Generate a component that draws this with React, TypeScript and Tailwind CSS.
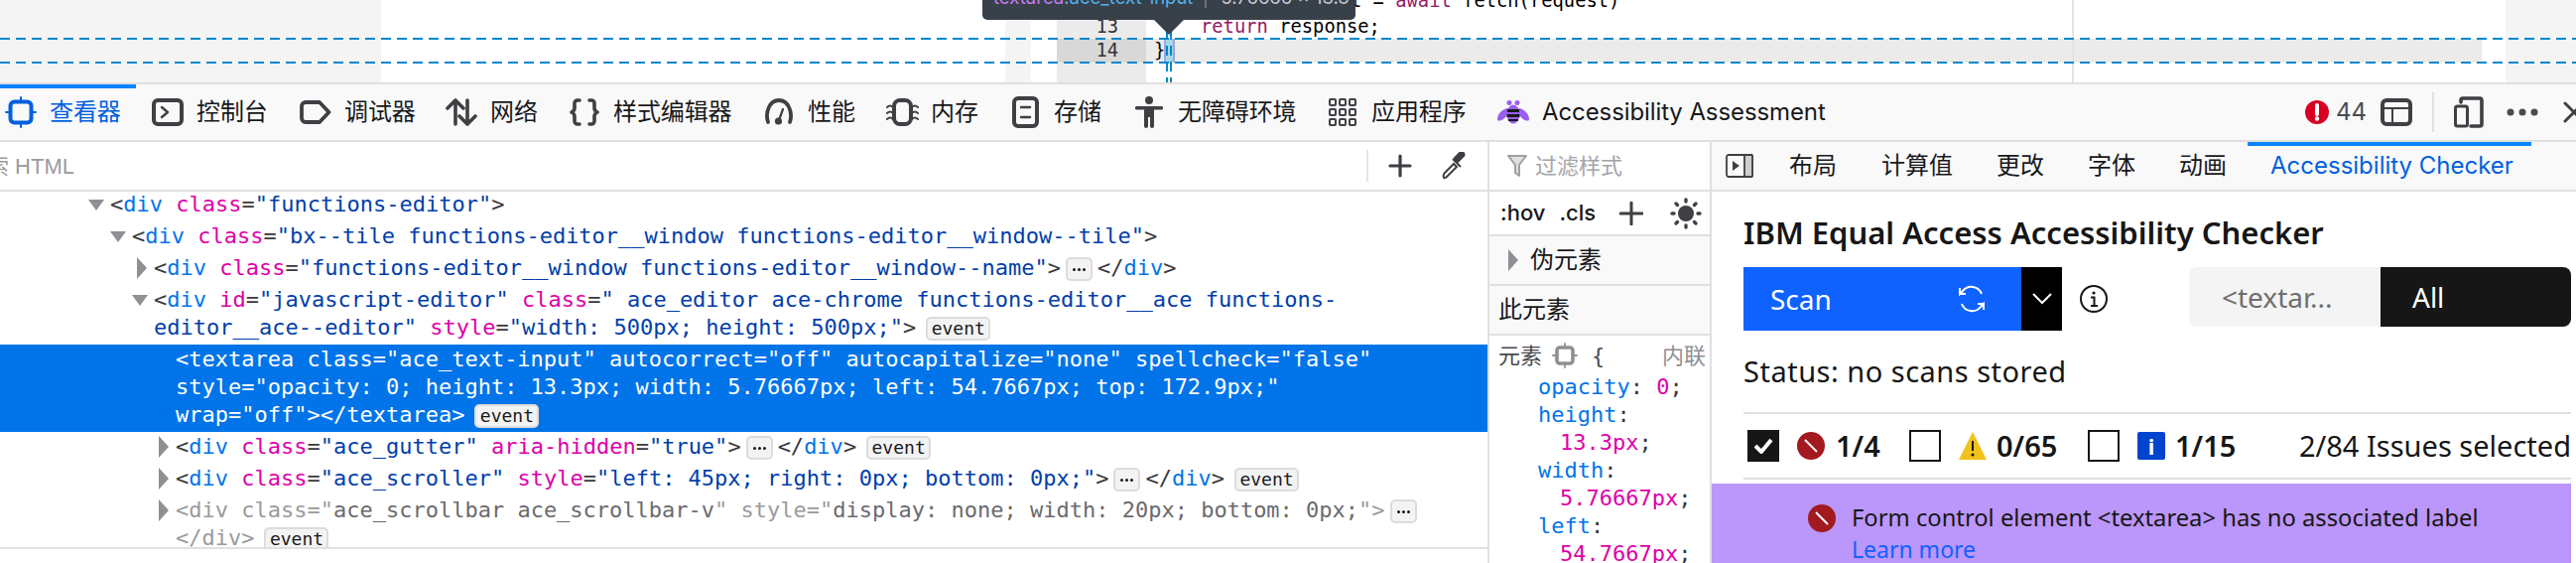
import React from "react";

const UI = "font-['Inter','Noto_Sans_CJK_SC',sans-serif]";
const MONO = "font-['DejaVu_Sans_Mono',monospace]";
const PLEX = "font-['Noto_Sans',sans-serif]";

const S = { fill: "none", stroke: "#3f3f44", strokeLinecap: "round" as const, strokeLinejoin: "round" as const };

const InspectorIcon = () => (
  <svg width="32" height="32" viewBox="0 0 32 32" fill="none" stroke="#0060df" strokeLinecap="round">
    <rect x="5.5" y="5.5" width="21" height="21" rx="4" strokeWidth="4" />
    <path d="M16 1v4M16 27v4M1 16h4M27 16h4" strokeWidth="2" />
  </svg>
);
const ConsoleIcon = () => (
  <svg width="32" height="28" viewBox="0 0 32 28" {...S}>
    <rect x="2" y="2" width="28" height="24" rx="4" strokeWidth="4" />
    <path d="M10 9l6 5-6 5" strokeWidth="2.4" />
  </svg>
);
const DebuggerIcon = () => (
  <svg width="32" height="24" viewBox="0 0 32 24" {...S}>
    <path d="M6 2h14l9.5 10L20 22H6a4 4 0 0 1-4-4V6a4 4 0 0 1 4-4z" strokeWidth="3.8" />
  </svg>
);
const NetworkIcon = () => (
  <svg width="32" height="28" viewBox="0 0 32 28" {...S} strokeWidth="3.6">
    <path d="M10 26V2M2 10l8-8 8 8" />
    <path d="M22 2v24M14 18l8 8 8-8" />
  </svg>
);
const BracesIcon = () => (
  <svg width="30" height="28" viewBox="0 0 30 28" {...S} strokeWidth="3.6">
    <path d="M10 2H8a3 3 0 0 0-3 3v5c0 2-1 3-3 4 2 1 3 2 3 4v5a3 3 0 0 0 3 3h2" />
    <path d="M20 2h2a3 3 0 0 1 3 3v5c0 2 1 3 3 4-2 1-3 2-3 4v5a3 3 0 0 1-3 3h-2" />
  </svg>
);
const PerfIcon = () => (
  <svg width="32" height="28" viewBox="0 0 32 28" {...S}>
    <path d="M5 24C2 15 6 2 16 2s14 13 11 22" strokeWidth="3.8" />
    <path d="M16 22l4-11" strokeWidth="2.2" />
    <circle cx="15.5" cy="23" r="3.6" fill="#3f3f44" stroke="none" />
  </svg>
);
const MemoryIcon = () => (
  <svg width="33" height="28" viewBox="0 0 33 28" {...S}>
    <rect x="8" y="2" width="17" height="24" rx="6" strokeWidth="4" />
    <path d="M1 9c2-2 4-2 6 0M1 15c2-2 4-2 6 0M1 21c2-2 4-2 6 0M26 9c2-2 4-2 6 0M26 15c2-2 4-2 6 0M26 21c2-2 4-2 6 0" strokeWidth="2" />
  </svg>
);
const StorageIcon = () => (
  <svg width="27" height="32" viewBox="0 0 27 32" {...S}>
    <rect x="2" y="2" width="23" height="28" rx="4" strokeWidth="4" />
    <path d="M9 11h9M9 21h9" strokeWidth="2.4" />
  </svg>
);
const A11yIcon = () => (
  <svg width="28" height="32" viewBox="0 0 28 32">
    <circle cx="14" cy="4" r="4" fill="#3f3f44" />
    <path d="M1.5 10h25a1.5 1.5 0 0 1 0 3.500H19V30a2 2 0 0 1-4 0v-9h-2v9a2 2 0 0 1-4 0V13.500H1.500a1.750 1.750 0 0 1 0-3.500z" fill="#3f3f44" />
  </svg>
);
const AppsIcon = () => (
  <svg width="28" height="28" viewBox="0 0 28 28" fill="none" stroke="#3f3f44" strokeWidth="2">
    {[1, 11, 21].map((y) => [1, 11, 21].map((x) => <rect key={`${x}-${y}`} x={x} y={y} width="6" height="6" rx="1" />))}
  </svg>
);
const BeeIcon = () => (
  <svg width="32" height="24" viewBox="0 0 32 24">
    <circle cx="12" cy="2.500" r="2.500" fill="#9a5df0" />
    <circle cx="20" cy="2.500" r="2.500" fill="#9a5df0" />
    <path d="M10 8C5 9 0 14 0 19c0 2 3 2 6 0 3-2 5-6 5-10z" fill="#9a5df0" />
    <path d="M22 8c5 1 10 6 10 11 0 2-3 2-6 0-3-2-5-6-5-10z" fill="#9a5df0" />
    <ellipse cx="16" cy="14" rx="6.500" ry="9.500" fill="#9a5df0" />
    <path d="M10 9h12v3H10zM9.500 14h13v3h-13zM11 19h10v2H11z" fill="#1a1a1a" />
  </svg>
);

const Tab = ({ w, icon, label, active }: { w: string; icon: React.ReactNode; label: string; active?: boolean }) => (
  <div className={`relative flex h-full shrink-0 items-center ${w}`}>
    <div className="mr-[8px] flex w-[42px] shrink-0 items-center justify-center">{icon}</div>
    <span className={`whitespace-nowrap text-[24px] tracking-[-0.1px] ${active ? "text-[#0060df]" : "text-[#18181a]"}`}>{label}</span>
    {active && <div className="absolute left-0 top-0 h-[4px] w-[137px] bg-[#0a84ff]" />}
  </div>
);

const Ev = () => (
  <span className="ml-[10px] mt-[3px] inline-flex h-[24px] w-[65px] items-center justify-center rounded-[5px] border-2 border-[#dcdcdc] bg-[#f3f3f3] align-top text-[18px] leading-none text-[#18181a]">event</span>
);
const Dots = () => (
  <span className="mx-[5px] mt-[3px] inline-flex h-[24px] w-[27px] items-center justify-center gap-[2px] rounded-[5px] border-2 border-[#dcdcdc] bg-[#f3f3f3] align-top">
    <i className="h-[3px] w-[3px] rounded-full bg-[#18181a]" />
    <i className="h-[3px] w-[3px] rounded-full bg-[#18181a]" />
    <i className="h-[3px] w-[3px] rounded-full bg-[#18181a]" />
  </span>
);
const Tg = ({ c }: { c: string }) => <span className="text-[#0074e8]">{c}</span>;
const At = ({ c }: { c: string }) => <span className="text-[#dd00a9]">{c}</span>;
const Va = ({ c }: { c: string }) => <span className="text-[#003eaa]">{c}</span>;
const Down = () => (
  <svg width="16" height="14" viewBox="0 0 16 14" className="shrink-0"><path d="M0 2h16l-8 11z" fill="#8f8f94" /></svg>
);
const Right = () => (
  <svg width="11" height="22" viewBox="0 0 11 22" className="shrink-0"><path d="M1 0l10 11L1 22z" fill="#8f8f94" /></svg>
);

const Row = ({ pad, tw, children }: { pad: string; tw?: React.ReactNode; children: React.ReactNode }) => (
  <div className={`flex pb-[3px] pt-[1px] leading-[28px] text-[#38383d] ${pad}`}>
    <div className="flex h-[28px] w-[22px] shrink-0 items-center">{tw}</div>
    <div className="whitespace-pre">{children}</div>
  </div>
);

const Violation = () => (
  <svg width="28" height="28" viewBox="0 0 28 28" className="shrink-0">
    <circle cx="14" cy="14" r="14" fill="#a2191f" />
    <path d="M8 8l12 12" stroke="#fff" strokeWidth="2" />
  </svg>
);
const Check = ({ on }: { on?: boolean }) =>
  on ? (
    <div className="flex h-[32px] w-[32px] shrink-0 items-center justify-center bg-[#161616]">
      <svg width="20" height="16" viewBox="0 0 20 16"><path d="M2 8l6 6L18 2" fill="none" stroke="#fff" strokeWidth="4" /></svg>
    </div>
  ) : (
    <div className="h-[32px] w-[32px] shrink-0 border-2 border-[#161616] bg-white" />
  );

export default function App() {
  return (
    <div className={`h-[567px] w-[2596px] overflow-hidden bg-white ${UI}`}>
      {/* page under the tools */}
      <div className="relative flex h-[83px] overflow-hidden">
        <div className="w-[384px] shrink-0 bg-[#f4f4f4]" />
        <div className="w-[629px] shrink-0" />
        <div className="w-[26px] shrink-0 bg-[#f4f4f4]" />
        <div className="w-[26px] shrink-0" />
        <div className={`w-[90px] shrink-0 bg-[#ebebeb] pt-[14px] text-right text-[18.8px] text-[#333] ${MONO}`}>
          <div className="h-[25px] pr-[28px] leading-[25px]">13</div>
          <div className="h-[24px] bg-[#d8d8d8] pr-[28px] leading-[24px]">14</div>
        </div>
        <div className={`w-[933px] shrink-0 pt-[14px] text-[18.8px] text-black ${MONO}`}>
          <div className="h-[25px] pl-[55px] leading-[25px]"><span className="text-[#931a68]">return</span> response;</div>
          <div className="h-[24px] bg-[#ebebeb] pl-[8px] leading-[24px]">{"}"}</div>
        </div>
        <div className="w-[437px] shrink-0 border-l-2 border-[#e4e4e4] pt-[39px]">
          <div className="h-[24px] w-[411px] bg-[#ebebeb]" />
        </div>
        <div className="flex-1 bg-[#f4f4f4]" />

        {/* overlays: fetch fragment, highlighter box, guides, infobar */}
        <div className={`absolute left-[1361px] top-[-13px] whitespace-pre text-[18.8px] text-black ${MONO}`}>t = <span className="text-[#931a68]">await</span> fetch(request)</div>
        <div className="absolute left-[1173px] top-[39px] h-[24px] w-[11px] border-x-2 border-[#a3a3df] bg-[#a4d8e8]" />
        <div className="absolute left-0 top-[38px] h-[2px] w-full bg-[repeating-linear-gradient(90deg,#0088cc_0,#0088cc_10px,transparent_10px,transparent_16px)]" />
        <div className="absolute left-0 top-[62px] h-[2px] w-full bg-[repeating-linear-gradient(90deg,#0088cc_0,#0088cc_10px,transparent_10px,transparent_16px)]" />
        <div className="absolute left-[1175px] top-[30px] h-[53px] w-[2px] bg-[repeating-linear-gradient(180deg,#0088cc_0,#0088cc_10px,transparent_10px,transparent_16px)]" />
        <div className="absolute left-[1179px] top-[30px] h-[53px] w-[2px] bg-[repeating-linear-gradient(180deg,#0088cc_0,#0088cc_10px,transparent_10px,transparent_16px)]" />
        <div className="absolute left-[990px] top-0 flex h-[20px] w-[376px] items-start overflow-hidden rounded-b-[5px] bg-[#38404a] pl-[11px] text-[18.500px] leading-[26px] whitespace-nowrap">
          <span className="-mt-[16px] text-[#c77dee]">textarea</span>
          <span className="-mt-[16px] text-[#4fb4f0]">.ace_text-input</span>
          <span className="ml-[12px] mr-[14px] h-[8px] w-[2px] bg-[#6b7079]" />
          <span className="-mt-[16px] text-[#c8cbd0]">5.76666 × 13.3</span>
        </div>
        <svg width="30" height="15" viewBox="0 0 30 15" className="absolute left-[1163px] top-[20px]"><path d="M0 0h30L15 15z" fill="#38404a" /></svg>
      </div>

      {/* main toolbar */}
      <div className="flex h-[60px] items-center overflow-hidden border-y-2 border-[#e0e0e0] bg-[#f9f9fa]">
        <Tab w="w-[148px]" active icon={<InspectorIcon />} label="查看器" />
        <Tab w="w-[149px]" icon={<ConsoleIcon />} label="控制台" />
        <Tab w="w-[147px]" icon={<DebuggerIcon />} label="调试器" />
        <Tab w="w-[124px]" icon={<NetworkIcon />} label="网络" />
        <Tab w="w-[196px]" icon={<BracesIcon />} label="样式编辑器" />
        <Tab w="w-[124px]" icon={<PerfIcon />} label="性能" />
        <Tab w="w-[124px]" icon={<MemoryIcon />} label="内存" />
        <Tab w="w-[125px]" icon={<StorageIcon />} label="存储" />
        <Tab w="w-[195px]" icon={<A11yIcon />} label="无障碍环境" />
        <Tab w="w-[172px]" icon={<AppsIcon />} label="应用程序" />
        <Tab w="w-[360px]" icon={<BeeIcon />} label="Accessibility Assessment" />
        <div className="ml-auto flex items-center">
          <svg width="24" height="24" viewBox="0 0 24 24">
            <circle cx="12" cy="12" r="12" fill="#d70022" />
            <path d="M12 5v9" stroke="#fff" strokeWidth="4" strokeLinecap="round" />
            <circle cx="12" cy="18.500" r="2.200" fill="#fff" />
          </svg>
          <span className="ml-[7px] w-[27px] text-[24px] text-[#4a4a4f]">44</span>
          <svg width="32" height="28" viewBox="0 0 32 28" className="ml-[18px]" {...S}>
            <rect x="2" y="2" width="28" height="24" rx="4" strokeWidth="4" />
            <path d="M2 10h28M12 10v16" strokeWidth="2" />
          </svg>
          <div className="ml-[20px] h-[40px] w-[2px] bg-[#e0e0e0]" />
          <svg width="30" height="32" viewBox="0 0 30 32" className="ml-[20px]" {...S}>
            <path d="M7 6V4a2 2 0 0 1 2-2h17a2 2 0 0 1 2 2v24a2 2 0 0 1-2 2h-9" strokeWidth="3.600" />
            <rect x="1.500" y="10" width="12" height="20" rx="2" strokeWidth="3" />
          </svg>
          <svg width="32" height="10" viewBox="0 0 32 10" className="ml-[23px]" fill="#4a4a4f">
            <circle cx="4" cy="5" r="3.500" /><circle cx="16" cy="5" r="3.500" /><circle cx="28" cy="5" r="3.500" />
          </svg>
          <svg width="13" height="22" viewBox="0 0 13 22" className="ml-[25px]" {...S} strokeWidth="3">
            <path d="M2 2l18 18M20 2L2 20" />
          </svg>
        </div>
      </div>

      <div className="flex h-[424px] overflow-hidden">
        {/* markup pane */}
        <div className="w-[1501px] shrink-0 border-r-2 border-[#e0e0e0]">
          <div className="flex h-[50px] items-center overflow-hidden border-b-2 border-[#e0e0e0]">
            <span className="ml-[-13px] whitespace-nowrap text-[22px] text-[#9a9a9e] font-['Liberation_Sans','Noto_Sans_CJK_SC',sans-serif]">索 HTML</span>
            <div className="ml-auto mr-[20px] flex items-center">
              <div className="h-[32px] w-[2px] bg-[#e4e4e4]" />
              <svg width="24" height="24" viewBox="0 0 24 24" className="ml-[20px]" stroke="#3f3f44" strokeWidth="3.200" strokeLinecap="round"><path d="M12 2v20M2 12h20" /></svg>
              <svg width="26" height="28" viewBox="0 0 26 28" className="ml-[30px]" fill="none" stroke="#3f3f44" strokeWidth="2">
                <path d="M2 26c-1-1 0-4 1-5l9-9 3 3-9 9c-1 1-3 3-4 2z" />
                <path d="M11 7l8 8M16 10l6-6c2-2-2-6-4-3l-5 5z" fill="#3f3f44" />
              </svg>
            </div>
          </div>
          <div className="h-[358px] overflow-hidden">
            <div className={`-mt-[2px] text-[22px] ${MONO}`}>
              <Row pad="pl-[89px]" tw={<Down />}>&lt;<Tg c="div" /> <At c="class" />=<Va c={'"functions-editor"'} />&gt;</Row>
              <Row pad="pl-[111px]" tw={<Down />}>&lt;<Tg c="div" /> <At c="class" />=<Va c={'"bx--tile functions-editor__window functions-editor__window--tile"'} />&gt;</Row>
              <Row pad="pl-[133px]" tw={<div className="ml-[4px]"><Right /></div>}>&lt;<Tg c="div" /> <At c="class" />=<Va c={'"functions-editor__window functions-editor__window--name"'} />&gt;<Dots />&lt;/<Tg c="div" />&gt;</Row>
              <Row pad="pl-[133px]" tw={<Down />}>
                <div>&lt;<Tg c="div" /> <At c="id" />=<Va c={'"javascript-editor"'} /> <At c="class" />=<Va c={'" ace_editor ace-chrome functions-editor__ace functions-'} /></div>
                <div><Va c={'editor__ace--editor"'} /> <At c="style" />=<Va c={'"width: 500px; height: 500px;"'} />&gt;<Ev /></div>
              </Row>
              <div className="flex bg-[#0074e8] pb-[3px] pl-[155px] pt-[1px] leading-[28px] text-white">
                <div className="w-[22px] shrink-0" />
                <div className="whitespace-pre">
                  <div>{'<textarea class="ace_text-input" autocorrect="off" autocapitalize="none" spellcheck="false"'}</div>
                  <div>{'style="opacity: 0; height: 13.3px; width: 5.76667px; left: 54.7667px; top: 172.9px;"'}</div>
                  <div>{'wrap="off"></textarea>'}<Ev /></div>
                </div>
              </div>
              <Row pad="pl-[155px]" tw={<div className="ml-[4px]"><Right /></div>}>&lt;<Tg c="div" /> <At c="class" />=<Va c={'"ace_gutter"'} /> <At c="aria-hidden" />=<Va c={'"true"'} />&gt;<Dots />&lt;/<Tg c="div" />&gt;<Ev /></Row>
              <Row pad="pl-[155px]" tw={<div className="ml-[4px]"><Right /></div>}>&lt;<Tg c="div" /> <At c="class" />=<Va c={'"ace_scroller"'} /> <At c="style" />=<Va c={'"left: 45px; right: 0px; bottom: 0px;"'} />&gt;<Dots />&lt;/<Tg c="div" />&gt;<Ev /></Row>
              <Row pad="pl-[155px]" tw={<div className="ml-[4px]"><Right /></div>}>
                <div className="text-[#9a9a9e]">&lt;div class=&quot;<span className="text-[#6a6a6f]">ace_scrollbar ace_scrollbar-v</span>&quot; style=&quot;<span className="text-[#6a6a6f]">display: none; width: 20px; bottom: 0px;</span>&quot;&gt;<Dots /></div>
                <div className="text-[#9a9a9e]">&lt;/div&gt;<Ev /></div>
              </Row>
            </div>
          </div>
          <div className="h-[2px] bg-[#e0e0e0]" />
        </div>

        {/* rules pane */}
        <div className="w-[224px] shrink-0 overflow-hidden border-r-2 border-[#e0e0e0]">
          <div className="flex h-[50px] items-center border-b-2 border-[#e0e0e0] pl-[18px] text-[22px] text-[#a4a4a8]">
            <svg width="20" height="22" viewBox="0 0 20 22" fill="#e0e0e2" stroke="#a0a0a4" strokeWidth="2" strokeLinejoin="round"><path d="M1 1h18l-7 9v11l-4-3v-8z" /></svg>
            <span className="ml-[8px]">过滤样式</span>
          </div>
          <div className="flex h-[45px] items-center border-b-2 border-[#e0e0e0] pl-[11px] text-[22px] font-medium text-[#18181a]">
            <span>:hov</span>
            <span className="ml-[14px]">.cls</span>
            <svg width="24" height="24" viewBox="0 0 24 24" className="ml-[24px]" stroke="#3f3f44" strokeWidth="3" strokeLinecap="round"><path d="M12 1v22M1 12h22" /></svg>
            <svg width="32" height="32" viewBox="0 0 32 32" className="ml-[27px]">
              <circle cx="16" cy="16" r="8" fill="#3f3f44" />
              <g stroke="#3f3f44" strokeWidth="3.400" strokeLinecap="round"><path d="M16 2v2M16 28v2M2 16h2M28 16h2M6 6l1.500 1.500M24.500 24.500L26 26M6 26l1.500-1.500M24.500 7.500L26 6" /></g>
            </svg>
          </div>
          <div className="flex h-[50px] items-center border-b-2 border-[#e0e0e0] bg-[#f9f9fa] pl-[18px] text-[24px] text-[#18181a]">
            <Right />
            <span className="ml-[12px]">伪元素</span>
          </div>
          <div className="flex h-[50px] items-center border-b-2 border-[#e0e0e0] bg-[#f9f9fa] pl-[9px] text-[24px] text-[#18181a]">此元素</div>
          <div className="flex h-[38px] items-center pl-[9px] pt-[2px] text-[22px] text-[#4a4a4f]">
            <span>元素</span>
            <svg width="26" height="26" viewBox="0 0 26 26" className="ml-[10px]" fill="none" stroke="#8f8f94" strokeLinecap="round">
              <rect x="5" y="5" width="16" height="16" rx="3" strokeWidth="3.600" />
              <path d="M13 1v3M13 22v3M1 13h3M22 13h3" strokeWidth="1.800" />
            </svg>
            <span className={`ml-[14px] ${MONO}`}>{"{"}</span>
            <span className="ml-auto mr-[4px] text-[#8f8f94]">内联</span>
          </div>
          <div className={`pl-[49px] text-[22px] leading-[28px] text-[#38383d] ${MONO}`}>
            <div><span className="text-[#0074e8]">opacity</span>: <span className="text-[#dd00a9]">0</span>;</div>
            <div className="text-[#0074e8]">height<span className="text-[#38383d]">:</span></div>
            <div className="pl-[22px]"><span className="text-[#dd00a9]">13.3px</span>;</div>
            <div className="text-[#0074e8]">width<span className="text-[#38383d]">:</span></div>
            <div className="pl-[22px]"><span className="text-[#dd00a9]">5.76667px</span>;</div>
            <div className="text-[#0074e8]">left<span className="text-[#38383d]">:</span></div>
            <div className="pl-[22px]"><span className="text-[#dd00a9]">54.7667px</span>;</div>
          </div>
        </div>

        {/* sidebar */}
        <div className="flex-1 overflow-hidden">
          <div className="flex h-[50px] items-center border-b-2 border-[#e0e0e0] bg-[#f9f9fa] text-[24px] text-[#18181a]">
            <svg width="28" height="24" viewBox="0 0 28 24" className="ml-[14px]" fill="none" stroke="#3f3f44" strokeWidth="1.800">
              <rect x="1" y="1" width="26" height="22" rx="2" />
              <path d="M19 1h7a1 1 0 0 1 1 1v20a1 1 0 0 1-1 1h-7z" fill="#cfcfd2" />
              <path d="M7 7l7 5-7 5z" fill="#3f3f44" stroke="none" />
            </svg>
            <span className="ml-[36px] w-[93px]">布局</span>
            <span className="w-[116px]">计算值</span>
            <span className="w-[92px]">更改</span>
            <span className="w-[92px]">字体</span>
            <span className="w-[69px]">动画</span>
            <div className="relative flex h-full w-[286px] items-center pl-[23px] text-[#0060df]">
              <div className="absolute left-0 top-0 h-[4px] w-full bg-[#0a84ff]" />
              <span className="whitespace-nowrap">Accessibility Checker</span>
            </div>
          </div>

          <div className={`pl-[32px] pr-[5px] text-[#161616] ${PLEX}`}>
            <div className="whitespace-nowrap pt-[20px] text-[31px] font-semibold leading-[42px]">IBM Equal Access Accessibility Checker</div>
            <div className="mt-[14px] flex h-[64px]">
              <div className="flex w-[280px] items-center justify-between bg-[#0f62fe] pl-[27px] pr-[36px] text-[28px] text-white">
                <span>Scan</span>
                <svg width="28" height="28" viewBox="0 0 28 28" fill="none" stroke="#fff" strokeWidth="2">
                  <path d="M24 9A11 11 0 0 0 5 6L2 9V3M2 9h6M4 19a11 11 0 0 0 19 3l3-3v6M26 19h-6" />
                </svg>
              </div>
              <div className="flex w-[41px] items-center justify-center bg-black">
                <svg width="20" height="12" viewBox="0 0 20 12" fill="none" stroke="#fff" strokeWidth="2"><path d="M1 1l9 9 9-9" /></svg>
              </div>
              <svg width="28" height="28" viewBox="0 0 28 28" className="ml-[18px] mt-[18px]" fill="none" stroke="#161616" strokeWidth="2">
                <circle cx="14" cy="14" r="13" />
                <path d="M11 12.500h3.500V21M11 21h7" />
                <circle cx="14" cy="8" r="1.600" fill="#161616" stroke="none" />
              </svg>
              <div className="ml-auto flex h-[60px] w-[385px] overflow-hidden rounded-[8px] text-[28px]">
                <div className="flex w-[193px] items-center bg-[#f4f4f4] pl-[33px] text-[#6f6f6f]">&lt;textar...</div>
                <div className="flex flex-1 items-center bg-[#161616] pl-[32px] text-white">All</div>
              </div>
            </div>
            <div className="mt-[23px] text-[29px] leading-[36px] tracking-[0.5px]">Status: no scans stored</div>
            <div className="mt-[23px] h-[2px] bg-[#e0e0e0]" />
            <div className="flex h-[64px] items-center text-[29px]">
              <div className="ml-[4px] flex w-[163px] shrink-0 items-center">
                <Check on />
                <div className="ml-[18px]"><Violation /></div>
                <b className="ml-[11px] font-semibold">1/4</b>
              </div>
              <div className="flex w-[180px] shrink-0 items-center">
                <Check />
                <svg width="28" height="28" viewBox="0 0 28 28" className="ml-[18px] shrink-0">
                  <path d="M14 0l14 28H0z" fill="#f1c21b" />
                  <path d="M14 9v10" stroke="#161616" strokeWidth="2" />
                  <circle cx="14" cy="23" r="1.600" fill="#161616" />
                </svg>
                <b className="ml-[10px] font-semibold">0/65</b>
              </div>
              <Check />
              <div className="ml-[18px] flex h-[28px] w-[28px] shrink-0 items-center justify-center rounded-[2px] bg-[#0043ce] text-[22px] font-bold leading-none text-white">i</div>
              <b className="ml-[10px] font-semibold">1/15</b>
              <span className="ml-auto whitespace-nowrap">2/84 Issues selected</span>
            </div>
            <div className="h-[2px] bg-[#e0e0e0]" />
            <div className="-ml-[32px] mt-[4px] flex h-[90px] bg-[#bb96fb] pl-[97px] pt-[18px]">
              <div className="mt-[3px]"><Violation /></div>
              <div className="ml-[16px] text-[23.750px] leading-[32px] text-[#161616]">
                <div className="whitespace-nowrap">Form control element &lt;textarea&gt; has no associated label</div>
                <div className="text-[23px] text-[#0f62fe]">Learn more</div>
              </div>
            </div>
          </div>
        </div>
      </div>
    </div>
  );
}
